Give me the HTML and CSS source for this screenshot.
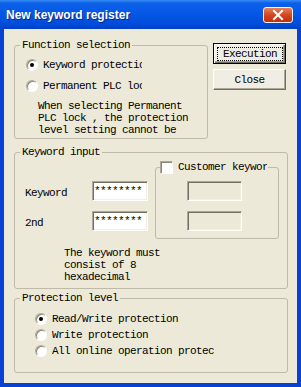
FILE: index.html
```html
<!DOCTYPE html>
<html lang="en">
<head>
    <meta charset="UTF-8">
    <meta name="viewport" content="width=device-width, initial-scale=1.0">
    <title>New keyword register</title>
    <link rel="stylesheet" href="styles.css">
</head>
<body>
    <div class="window">
        <div class="titlebar">
            <span class="title">New keyword register</span>
            <button class="close-btn" aria-label="Close">
                <svg width="28" height="14" viewBox="0 0 28 14">
                    <path d="M10 3 L18 11 M18 3 L10 11" stroke="#fff" stroke-width="2" stroke-linecap="square"/>
                </svg>
            </button>
        </div>

        <div class="client">
            <div class="top-row">
                <fieldset class="group func-group">
                    <legend>Function selection</legend>
                    <label class="radio-row">
                        <span class="radio checked"></span>
                        <span class="radio-text">Keyword protection</span>
                    </label>
                    <label class="radio-row">
                        <span class="radio"></span>
                        <span class="radio-text">Permanent PLC lock</span>
                    </label>
                    <p class="note">When selecting Permanent<br>PLC lock , the protection<br>level setting cannot be</p>
                </fieldset>

                <div class="actions">
                    <button class="btn btn-default"><span class="focus">Execution</span></button>
                    <button class="btn">Close</button>
                </div>
            </div>

            <fieldset class="group key-group">
                <legend>Keyword input</legend>
                <div class="key-row">
                    <div class="key-fields">
                        <div class="field-row">
                            <span class="field-label">Keyword</span>
                            <input class="text-box" type="text" value="********" readonly>
                        </div>
                        <div class="field-row">
                            <span class="field-label">2nd</span>
                            <input class="text-box" type="text" value="********" readonly>
                        </div>
                    </div>

                    <fieldset class="group cust-group">
                        <legend class="cust-legend">
                            <span class="checkbox"></span>
                            <span class="cust-text">Customer keyword</span>
                        </legend>
                        <input class="text-box disabled" type="text" disabled>
                        <input class="text-box disabled" type="text" disabled>
                    </fieldset>
                </div>
                <p class="note key-note">The keyword must<br>consist of 8<br>hexadecimal</p>
            </fieldset>

            <fieldset class="group prot-group">
                <legend>Protection level</legend>
                <label class="radio-row prot-row">
                    <span class="radio checked"></span>
                    <span class="radio-text wide">Read/Write protection</span>
                </label>
                <label class="radio-row prot-row">
                    <span class="radio"></span>
                    <span class="radio-text wide">Write protection</span>
                </label>
                <label class="radio-row prot-row">
                    <span class="radio"></span>
                    <span class="radio-text wide">All online operation protection</span>
                </label>
            </fieldset>
        </div>
    </div>
</body>
</html>
```

FILE: styles.css
```css
* {
    box-sizing: border-box;
}
body {
    margin: 0;
    font-family: "Liberation Mono", "DejaVu Sans Mono", monospace;
    font-size: 11px;
    letter-spacing: -0.6px;
    color: #000;
}
.window {
    width: 301px;
    height: 387px;
    display: flex;
    flex-direction: column;
    background: #0842d4; /* blue frame */
}
.titlebar {
    flex: none;
    height: 29px;
    display: flex;
    align-items: center;
    justify-content: space-between;
    padding: 0 8px 0 6px;
    background: linear-gradient(#3a8cf8 0, #0c61e8 3px, #0558e6 45%, #004bd9 85%, #0040c2 100%);
}
.title {
    font: bold 12px "Liberation Sans", Arial, sans-serif;
    letter-spacing: 0;
    color: #fff;
    text-shadow: 1px 1px #0b2a84;
}
.close-btn {
    width: 30px;
    height: 16px;
    padding: 0;
    border: 1px solid #f3f3f3;
    border-radius: 3px;
    background: linear-gradient(#e8805c, #d4471f 50%, #c0300c);
    display: flex;
    align-items: center;
    justify-content: center;
}
.client {
    flex: 1;
    margin: 0 4px 4px;
    padding: 10px;
    background: #ece9d8;
}

/* group boxes: legend sits 5px in from the left border */
.group {
    margin: 0;
    padding: 0;
    min-width: 0;
    border: 1px solid #bdbaa9;
    border-radius: 3px;
}
.group > legend {
    margin-left: 5px;
    padding: 0 2px;
    line-height: 12px;
}
.top-row {
    display: flex;
}
.func-group {
    width: 194px;
    padding: 3px 0 2px;
}
.func-group .radio-row {
    margin-left: 11px;
}
.func-group .note {
    margin-left: 23px;
}
.key-group {
    width: 274px;
    margin-top: 7px;
    padding: 0 0 5px;
}
.prot-group {
    width: 274px;
    margin-top: 3px;
    padding: 7px 0 13px;
}

/* radio buttons */
.radio-row {
    display: flex;
    align-items: center;
    height: 21px;
}
.prot-row {
    height: 16px;
    margin-left: 20px;
}
.radio {
    position: relative;
    flex: none;
    width: 12px;
    height: 12px;
    margin-right: 5px;
    border-radius: 50%;
    border: 1px solid;
    border-color: #aca899 #fff #fff #aca899;
    box-shadow: inset 1px 1px 0 #8a8778;
    background: #fff;
}
.radio.checked::after {
    content: "";
    position: absolute;
    left: 3px;
    top: 3px;
    width: 4px;
    height: 4px;
    border-radius: 50%;
    background: #000;
}
.radio-text {
    width: 99px;
    overflow: hidden;
    white-space: nowrap;
    line-height: 12px;
}
.radio-text.wide {
    width: 162px;
}
.note {
    margin: 4px 0 0;
    line-height: 12px;
    white-space: nowrap;
}

/* buttons */
.actions {
    display: flex;
    flex-direction: column;
    gap: 5px;
    margin-left: 5px;
    padding-top: 4px;
}
.btn {
    width: 73px;
    height: 21px;
    padding: 0;
    font: inherit;
    letter-spacing: inherit;
    color: #000;
    background: #efede4;
    border: 1px solid;
    border-color: #fff #716f64 #716f64 #fff;
    box-shadow: inset -1px -1px 0 #aca899;
}
.btn-default {
    border: 1px solid #000;
    box-shadow: inset 1px 1px 0 #fff, inset -1px -1px 0 #716f64, inset -2px -2px 0 #aca899;
}
.btn-default .focus {
    display: block;
    height: 14px;
    margin: 0 2px 0 3px;
    line-height: 12px;
    border: 1px dotted #000;
}

/* keyword inputs */
.key-row {
    display: flex;
    align-items: flex-start;
    margin-left: 10px;
}
.key-fields {
    display: flex;
    flex-direction: column;
    gap: 10px;
    padding-top: 23px;
}
.field-row {
    display: flex;
    align-items: center;
    height: 20px;
}
.field-label {
    width: 67px;
    padding-top: 4px;
}
.text-box {
    display: block;
    width: 56px;
    height: 20px;
    margin: 0;
    padding: 0 0 0 1px;
    font: inherit;
    letter-spacing: inherit;
    color: #000;
    background: #fff;
    border: 1px solid;
    border-color: #aca899 #fff #fff #aca899;
    box-shadow: inset 1px 1px 0 #716f64, inset -1px -1px 0 #f1efe2;
    outline: none;
}
.text-box.disabled {
    width: 55px;
    margin-left: 31px;
    background: #ece9d8;
}
.text-box.disabled + .text-box.disabled {
    margin-top: 10px;
}
.cust-group {
    width: 124px;
    margin: 3px 0 0 7px;
    padding: 7px 0;
}
.group > .cust-legend {
    display: flex;
    align-items: center;
    height: 13px;
    margin-left: 4px;
    padding: 0 1px 0 0;
    line-height: 13px;
}
.checkbox {
    flex: none;
    width: 13px;
    height: 13px;
    margin-right: 5px;
    border: 1px solid;
    border-color: #aca899 #fff #fff #aca899;
    box-shadow: inset 1px 1px 0 #8a8778;
    background: #fdfdfb;
}
.cust-text {
    width: 89px;
    overflow: hidden;
    white-space: nowrap;
}
.key-note {
    margin: 8px 0 0 49px;
}
```
